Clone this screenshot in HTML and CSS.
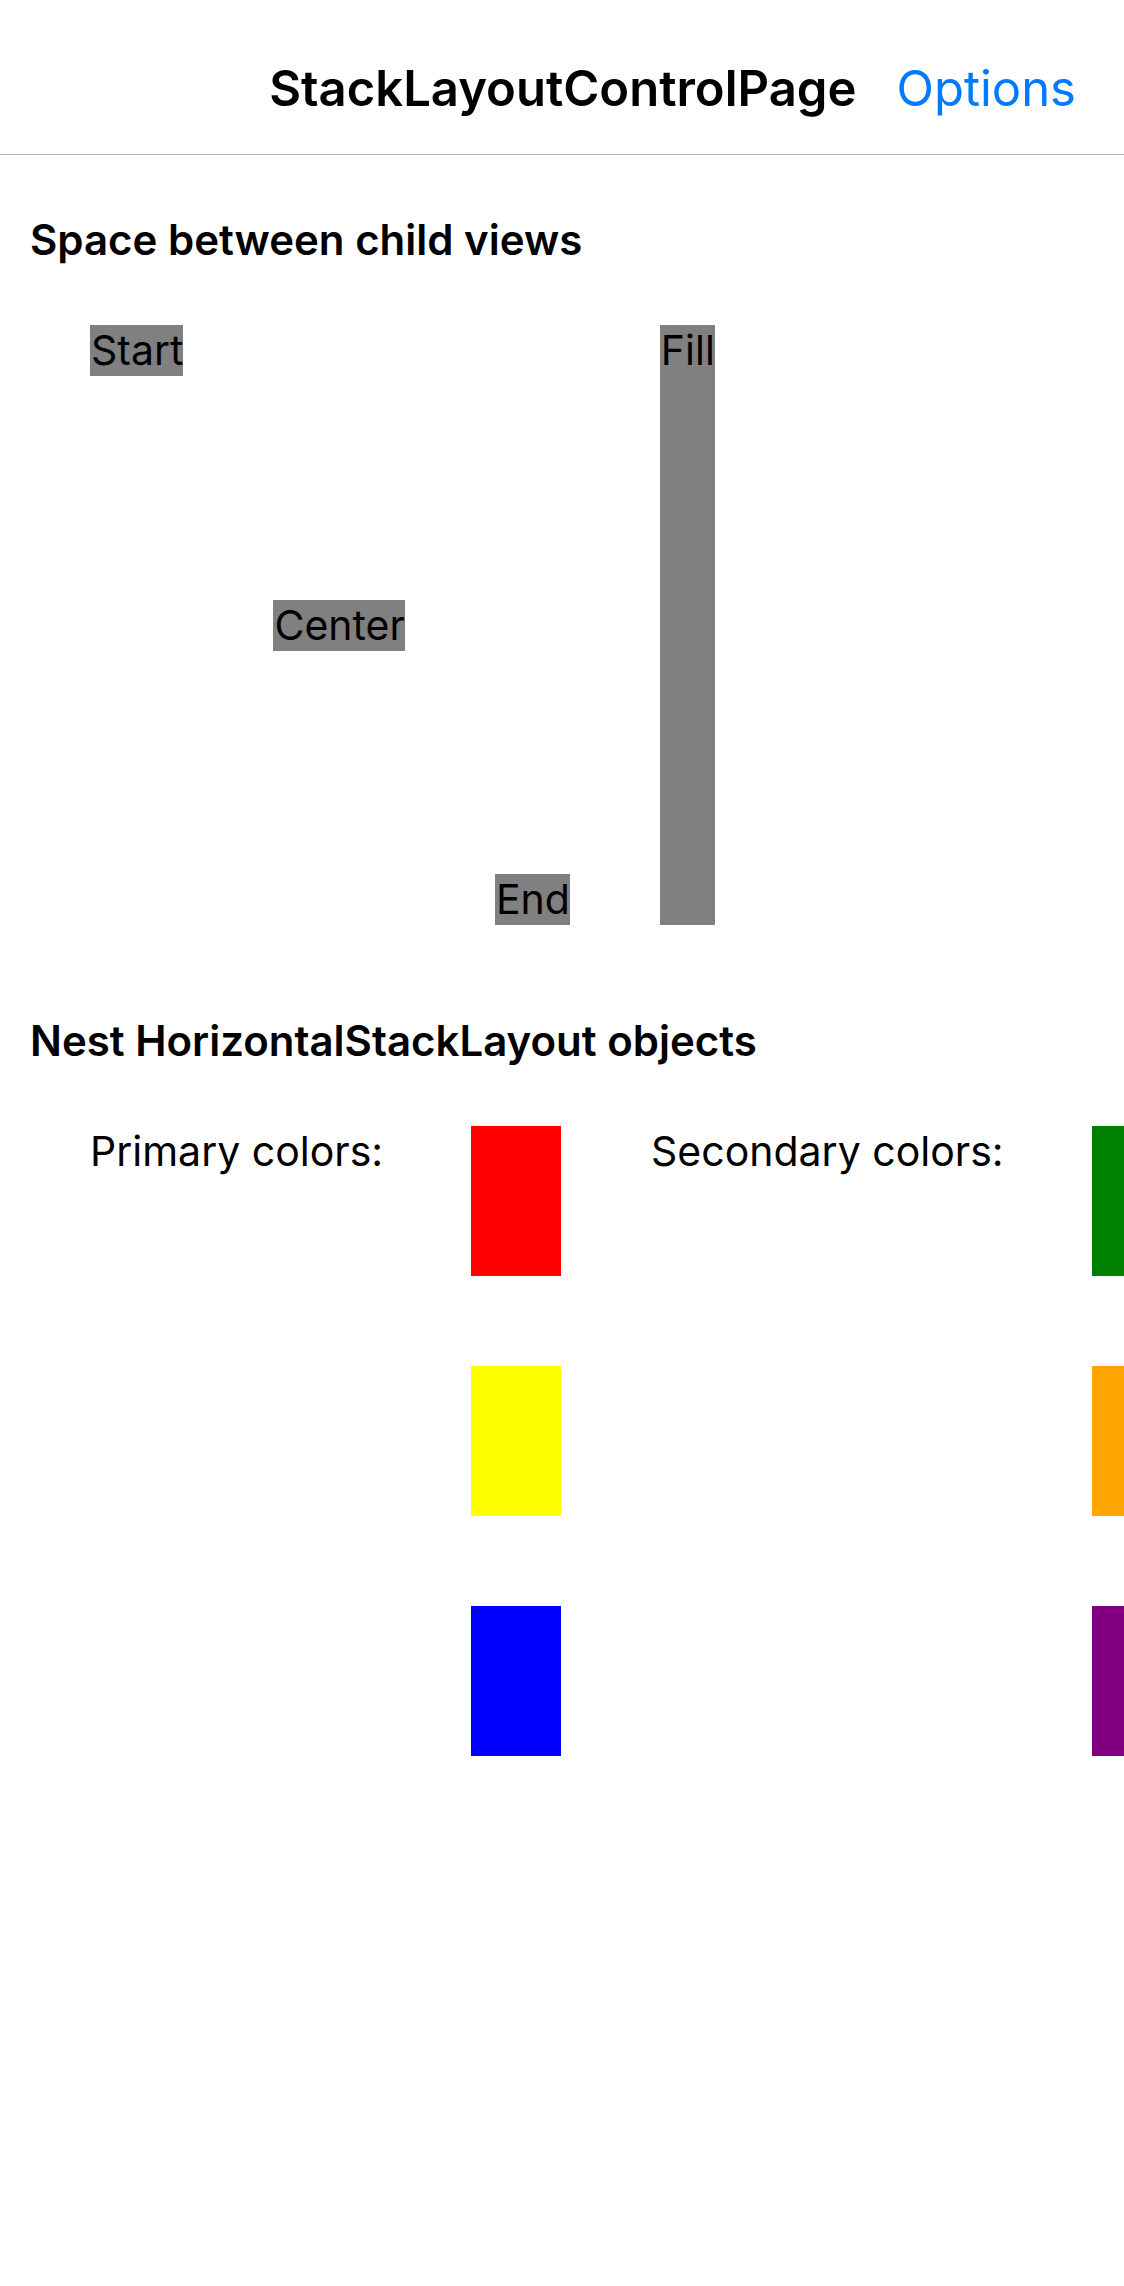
FILE: index.html
```html
<!DOCTYPE html>
<html lang="en">
<head>
<meta charset="utf-8">
<meta name="viewport" content="width=device-width, initial-scale=1">
<title>StackLayoutControlPage</title>
<link rel="stylesheet" href="styles.css">
</head>
<body>
<header class="navbar">
  <h1 class="title">StackLayoutControlPage</h1>
  <button class="options" type="button">Options</button>
</header>
<main class="content">
  <section>
    <h2 class="heading">Space between child views</h2>
    <div class="stack views">
      <span class="label start">Start</span>
      <span class="label center">Center</span>
      <span class="label end">End</span>
      <span class="label fill">Fill</span>
    </div>
  </section>
  <section>
    <h2 class="heading">Nest HorizontalStackLayout objects</h2>
    <div class="stack colors">
      <span class="caption">Primary colors:</span>
      <div class="swatches">
        <div class="swatch red"></div>
        <div class="swatch yellow"></div>
        <div class="swatch blue"></div>
      </div>
      <span class="caption">Secondary colors:</span>
      <div class="swatches">
        <div class="swatch green"></div>
        <div class="swatch orange"></div>
        <div class="swatch purple"></div>
      </div>
    </div>
  </section>
</main>
</body>
</html>
```
FILE: styles.css
```css
* {
  box-sizing: border-box;
}

body {
  margin: 0;
  background: #fff;
  color: #000;
  font-family: Inter, "Liberation Sans", sans-serif;
  font-size: 41px;
  line-height: 51px;
}

.navbar {
  display: flex;
  align-items: center;
  justify-content: flex-end;
  gap: 40px;
  height: 154px;
  padding: 24px 48px 0 0;
  box-shadow: 0 1px #b2b2b2;
}

.title {
  margin: 0;
  font-size: 49px;
  font-weight: 600;
  line-height: 60px;
}

.options {
  padding: 0;
  border: 0;
  background: none;
  color: #007aff;
  font: inherit;
  font-size: 49px;
  line-height: 60px;
}

.content {
  padding-left: 30px;
  overflow: hidden;
}

.heading {
  margin: 0;
  padding: 60px 0;
  font-size: 42px;
  font-weight: 600;
  line-height: 51px;
}

.stack {
  display: flex;
  gap: 90px;
  padding-left: 60px;
  white-space: nowrap;
}

.views {
  height: 600px;
  margin-bottom: 30px;
}

.colors {
  display: grid;
  grid-template-columns: 291px 90px 351px 90px;
  overflow: hidden;
}

.label {
  padding-left: 1px;
  background: #808080;
}

.start {
  align-self: flex-start;
}

.center {
  align-self: center;
}

.end {
  align-self: flex-end;
}

.fill {
  align-self: stretch;
}

.swatches {
  display: flex;
  flex-direction: column;
  gap: 90px;
}

.swatch {
  width: 90px;
  height: 150px;
}

.red { background: #f00; }
.yellow { background: #ff0; }
.blue { background: #00f; }
.green { background: #008000; }
.orange { background: #ffa500; }
.purple { background: #800080; }
```
